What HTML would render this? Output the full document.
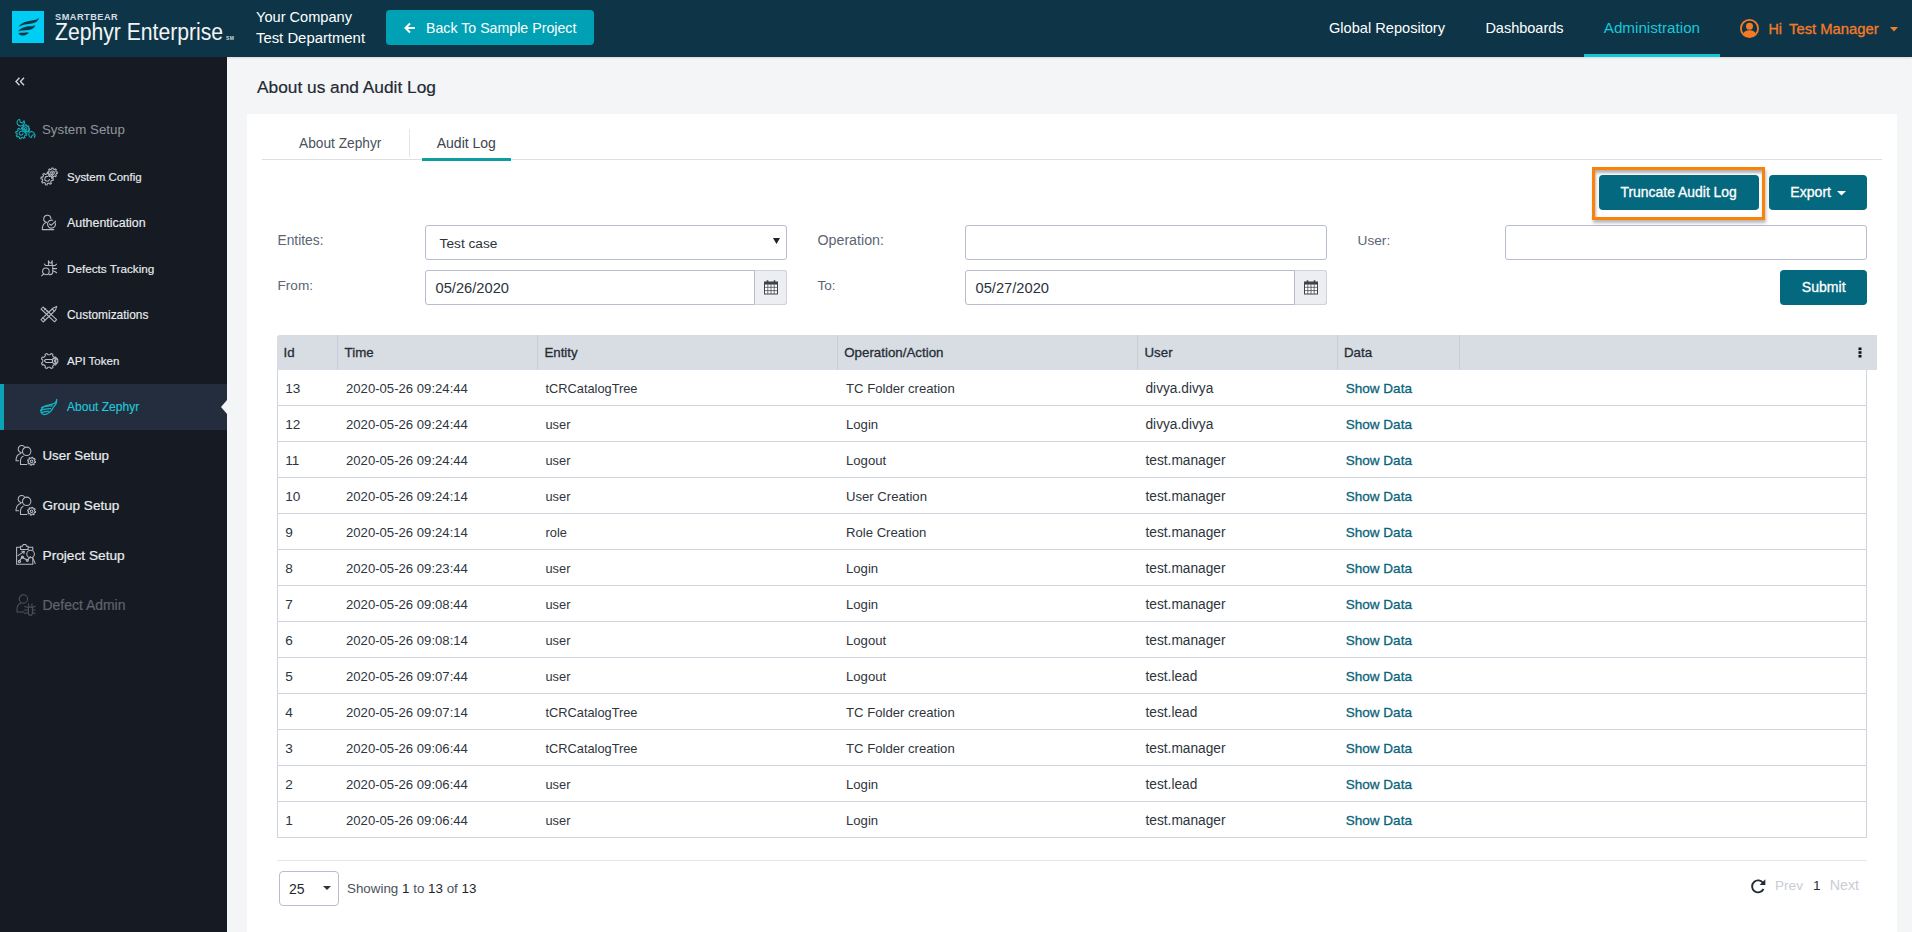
<!DOCTYPE html><html><head><meta charset="utf-8"><style>
*{box-sizing:border-box}
html,body{margin:0;padding:0}
body{width:1912px;height:932px;overflow:hidden;position:relative;background:#f4f5f7;font-family:"Liberation Sans",sans-serif}
.t{position:absolute;line-height:1;white-space:nowrap}
.r{position:absolute}
svg{position:absolute;overflow:visible}
</style></head><body>
<div class="r" style="left:247px;top:114px;width:1650px;height:818px;background:#fff"></div>
<div class="r" style="left:0px;top:0px;width:1912px;height:57px;background:#0e3547;box-shadow:0 1px 2px rgba(0,0,0,.12)"></div>
<div class="r" style="left:12px;top:11px;width:32px;height:32px;background:#00cdf4"></div>
<svg style="left:12px;top:11px" width="32" height="32" viewBox="0 0 32 32">
<path d="M6.3 16.3 C9 11.5 15 10.2 20 9.5 C23.5 9 26 8 27.2 6.2 C26.5 9.5 24 12 20 12.6 C15.5 13.3 10 13.5 6.3 16.3Z" fill="#0e3547"/>
<path d="M6 20.5 C8.5 16.5 14 15.3 18.5 15.2 C21 15.1 22.6 14.6 23.4 13.9 C22.5 17 20 18.6 16.5 18.9 C12.5 19.3 8.5 19 6 20.5Z" fill="#0e3547"/>
<path d="M6.5 22.3 C9 21.5 13 21.7 17 21.5 C15 23.8 12.5 24.8 10 24.6 C8 24.4 6.8 23.5 6.5 22.3Z" fill="#0e3547"/>
</svg>
<div class="t " style="left:55px;top:13.00px;font-size:9.2px;color:#d5dde2;font-weight:700;letter-spacing:0.5px;">SMARTBEAR</div>
<div class="t " style="left:54.5px;top:21.00px;font-size:23.5px;color:#f2f4f5;font-weight:400;transform:scaleX(0.9);transform-origin:0 0;">Zephyr Enterprise</div>
<div class="t " style="left:226px;top:36.00px;font-size:5px;color:#cfd8dc;font-weight:700;letter-spacing:0.3px;">SM</div>
<div class="t " style="left:256px;top:10.00px;font-size:14.6px;color:#ffffff;font-weight:400;">Your Company</div>
<div class="t " style="left:256px;top:31.00px;font-size:14.86px;color:#ffffff;font-weight:400;">Test Department</div>
<div class="r" style="left:386px;top:10px;width:208px;height:35px;background:#00a1b5;border-radius:4px"></div>
<svg style="left:404px;top:22px" width="12" height="12" viewBox="0 0 12 12"><path d="M11 6H2M6 1.5L1.5 6L6 10.5" stroke="#fff" stroke-width="2" fill="none"/></svg>
<div class="t " style="left:426px;top:21.00px;font-size:14.2px;color:#ffffff;font-weight:400;">Back To Sample Project</div>
<div class="t " style="left:1329px;top:21.00px;font-size:14.6px;color:#ffffff;font-weight:400;">Global Repository</div>
<div class="t " style="left:1485.4px;top:21.00px;font-size:14.5px;color:#ffffff;font-weight:400;">Dashboards</div>
<div class="t " style="left:1603.8px;top:20.00px;font-size:15.2px;color:#1cc6d6;font-weight:400;">Administration</div>
<div class="r" style="left:1584px;top:54px;width:136px;height:3px;background:#10c7d6"></div>
<svg style="left:1740px;top:19px" width="19" height="19" viewBox="0 0 19 19">
<circle cx="9.5" cy="9.5" r="8.6" stroke="#f57a26" stroke-width="1.8" fill="none"/>
<circle cx="9.5" cy="7.3" r="3.5" fill="#f57a26"/>
<path d="M3.2 15.2 C3.8 12.2 6.5 11.2 9.5 11.2 C12.5 11.2 15.2 12.2 15.8 15.2 C14 17.3 11.8 18.2 9.5 18.2 C7.2 18.2 5 17.3 3.2 15.2Z" fill="#f57a26"/>
</svg>
<div class="t " style="left:1768.5px;top:22.00px;font-size:14.3px;color:#f57a26;font-weight:400;-webkit-text-stroke:0.3px #f57a26;">Hi</div>
<div class="t " style="left:1789px;top:22.00px;font-size:14.8px;color:#f57a26;font-weight:400;-webkit-text-stroke:0.3px #f57a26;">Test Manager</div>
<svg style="left:1890px;top:27px" width="8" height="5" viewBox="0 0 8 5"><path d="M0 0H8L4 4.5Z" fill="#f57d25"/></svg>
<div class="r" style="left:0px;top:57px;width:227px;height:875px;background:#161b23"></div>
<svg style="left:15px;top:77px" width="10" height="9" viewBox="0 0 10 9"><path d="M4.5 0.8L1 4.5L4.5 8.2M9 0.8L5.5 4.5L9 8.2" stroke="#c9d3e3" stroke-width="1.4" fill="none"/></svg>
<svg style="left:10px;top:114px" width="30" height="30" viewBox="0 0 30 30" fill="none" stroke="#14a9b4" stroke-width="1.1" stroke-linejoin="round" stroke-linecap="round"><path d="M15.60 19.23 L16.89 19.65 L16.58 21.15 L15.23 21.04 L14.39 22.29 L15.00 23.50 L13.73 24.35 L12.85 23.31 L11.37 23.60 L10.95 24.89 L9.45 24.58 L9.56 23.23 L8.31 22.39 L7.10 23.00 L6.25 21.73 L7.29 20.85 L7.00 19.37 L5.71 18.95 L6.02 17.45 L7.37 17.56 L8.21 16.31 L7.60 15.10 L8.87 14.25 L9.75 15.29 L11.23 15.00 L11.65 13.71 L13.15 14.02 L13.04 15.37 L14.29 16.21 L15.50 15.60 L16.35 16.87 L15.31 17.75Z"/><path d="M13 19.3 A1.9 1.9 0 1 1 11.5 17.4"/><path d="M18.68 14.45 L19.60 14.65 L19.49 15.72 L18.55 15.73 L18.05 16.66 L18.56 17.45 L17.73 18.13 L17.06 17.48 L16.05 17.78 L15.85 18.70 L14.78 18.59 L14.77 17.65 L13.84 17.15 L13.05 17.66 L12.37 16.83 L13.02 16.16 L12.72 15.15 L11.80 14.95 L11.91 13.88 L12.85 13.87 L13.35 12.94 L12.84 12.15 L13.67 11.47 L14.34 12.12 L15.35 11.82 L15.55 10.90 L16.62 11.01 L16.63 11.95 L17.56 12.45 L18.35 11.94 L19.03 12.77 L18.38 13.44Z"/><circle cx="15.7" cy="14.8" r="1.3"/><path d="M8.6 5.6 A3.4 3.4 0 0 0 7.8 10.6 A3.4 3.4 0 0 0 12.2 11.3 L13.6 12.2"/><path d="M9.6 5.2 L10.2 8.2 L12.6 8.9 L14 6.7 A3.4 3.4 0 0 1 13.2 11"/><path d="M18 17.4 L19.5 18.2 A3.4 3.4 0 0 1 24.4 19.5 A3.4 3.4 0 0 1 24.2 23.6"/><path d="M18.6 16.2 L19.6 16.7"/><path d="M19 19.5 A3.4 3.4 0 0 0 21.3 23.6 L22.2 21.2 L24.7 20.5"/></svg>
<div class="t " style="left:42px;top:123.00px;font-size:13.3px;color:#90969e;font-weight:400;">System Setup</div>
<div class="r" style="left:0px;top:384px;width:227px;height:46px;background:#232d3d"></div>
<div class="r" style="left:0px;top:384px;width:4px;height:46px;background:#0aa3b8"></div>
<svg style="left:221px;top:400px" width="6" height="14" viewBox="0 0 6 14"><path d="M6 0V14L0 7Z" fill="#f4f5f7"/></svg>
<div class="t " style="left:67px;top:172.00px;font-size:11.47px;color:#e9ecef;font-weight:400;-webkit-text-stroke:0.15px #e9ecef;">System Config</div>
<div class="t " style="left:67px;top:217.00px;font-size:12.42px;color:#e9ecef;font-weight:400;-webkit-text-stroke:0.15px #e9ecef;">Authentication</div>
<div class="t " style="left:67px;top:263.00px;font-size:11.73px;color:#e9ecef;font-weight:400;-webkit-text-stroke:0.15px #e9ecef;">Defects Tracking</div>
<div class="t " style="left:67px;top:310.00px;font-size:11.92px;color:#e9ecef;font-weight:400;-webkit-text-stroke:0.15px #e9ecef;">Customizations</div>
<div class="t " style="left:67px;top:356.00px;font-size:11.54px;color:#e9ecef;font-weight:400;-webkit-text-stroke:0.15px #e9ecef;">API Token</div>
<div class="t " style="left:67px;top:401.00px;font-size:12.03px;color:#1fc8d9;font-weight:400;-webkit-text-stroke:0.15px #1fc8d9;">About Zephyr</div>
<svg style="left:36px;top:162px" width="28" height="28" viewBox="0 0 28 28" fill="none" stroke="#b4b9c2" stroke-width="1.05" stroke-linejoin="round" stroke-linecap="round"><path d="M15.79 16.49 L17.30 16.88 L17.05 18.56 L15.49 18.48 L14.64 19.90 L15.43 21.24 L14.06 22.25 L13.01 21.09 L11.41 21.49 L11.02 23.00 L9.34 22.75 L9.42 21.19 L8.00 20.34 L6.66 21.13 L5.65 19.76 L6.81 18.71 L6.41 17.11 L4.90 16.72 L5.15 15.04 L6.71 15.12 L7.56 13.70 L6.77 12.36 L8.14 11.35 L9.19 12.51 L10.79 12.11 L11.18 10.60 L12.86 10.85 L12.78 12.41 L14.20 13.26 L15.54 12.47 L16.55 13.84 L15.39 14.89Z"/><path d="M13.5 17.5 A2.4 2.4 0 1 1 11.6 14.4"/><path d="M20.21 9.99 L21.35 10.13 L21.35 11.47 L20.21 11.61 L19.70 12.85 L20.41 13.76 L19.46 14.71 L18.55 14.00 L17.31 14.51 L17.17 15.65 L15.83 15.65 L15.69 14.51 L14.45 14.00 L13.54 14.71 L12.59 13.76 L13.30 12.85 L12.79 11.61 L11.65 11.47 L11.65 10.13 L12.79 9.99 L13.30 8.75 L12.59 7.84 L13.54 6.89 L14.45 7.60 L15.69 7.09 L15.83 5.95 L17.17 5.95 L17.31 7.09 L18.55 7.60 L19.46 6.89 L20.41 7.84 L19.70 8.75Z"/><circle cx="16.5" cy="10.8" r="1.9"/><circle cx="16.5" cy="10.8" r="0.5" fill="#b4b9c2"/></svg>
<svg style="left:36px;top:208px" width="28" height="28" viewBox="0 0 28 28" fill="none" stroke="#b4b9c2" stroke-width="1.05" stroke-linejoin="round" stroke-linecap="round"><path d="M10.4 14.3 A3.6 3.6 0 1 1 14.9 10.6"/><path d="M10.3 14.4 C7.5 15.3 6.2 17.8 6.3 21.6 L17.8 21.6"/><path d="M19.3 14.8 A4 4 0 1 1 16.7 12.3"/><path d="M13.4 16 L15.2 17.3 L19.6 13.1"/></svg>
<svg style="left:36px;top:254px" width="28" height="28" viewBox="0 0 28 28" fill="none" stroke="#b4b9c2" stroke-width="1.05" stroke-linejoin="round" stroke-linecap="round"><path d="M11.8 11.4 L16.8 11.4 L16.8 18 C16.8 20 15.5 20.6 14 20.6 L13 20.6"/><path d="M12.5 11.3 L12.4 6.8 L13.8 9 L15.2 9 L16.2 6.8 L16.2 11.3"/><path d="M8.3 10 L9.5 11.4 L19.2 11.4 L20.5 10.2"/><path d="M16.8 14.6 L20.6 14.6"/><path d="M16.8 17 L18.8 17.5 L20.6 18.8"/><circle cx="9.9" cy="17.4" r="3.3"/><path d="M7.6 19.8 L5.6 21.8"/></svg>
<svg style="left:36px;top:300px" width="28" height="28" viewBox="0 0 28 28" fill="none" stroke="#b4b9c2" stroke-width="1.05" stroke-linejoin="round" stroke-linecap="round"><path d="M5 9 L7 7 L20.6 19.6 L18.6 21.8 Z"/><path d="M8.5 9.8 L9.8 8.6 M10.8 11.8 L11.8 10.9"/><path d="M5 19.7 L17.2 8 L20.8 6.4 L19.4 10.1 L7.2 22 Z"/><path d="M6.8 17.6 L9 19.9 M16.2 9 L18.4 11.1"/></svg>
<svg style="left:36px;top:346px" width="28" height="28" viewBox="0 0 28 28" fill="none" stroke="#b4b9c2" stroke-width="1.05" stroke-linejoin="round" stroke-linecap="round"><path d="M19.20 16.09 L20.55 16.95 L19.74 18.93 L18.18 18.59 L16.62 20.16 L16.96 21.72 L14.99 22.54 L14.12 21.20 L11.91 21.20 L11.05 22.55 L9.07 21.74 L9.41 20.18 L7.84 18.62 L6.28 18.96 L5.46 16.99 L6.80 16.12 L6.80 13.91 L5.45 13.05 L6.26 11.07 L7.82 11.41 L9.38 9.84 L9.04 8.28 L11.01 7.46 L11.88 8.80 L14.09 8.80 L14.95 7.45 L16.93 8.26 L16.59 9.82 L18.16 11.38 L19.72 11.04 L20.54 13.01 L19.20 13.88Z"/><path d="M16.5 13.4 L9.6 13.4 L8.4 14.9 L9.9 16.4 L16.5 16.4"/><circle cx="19.1" cy="14.9" r="2.8"/><path d="M18.4 14 L18.4 15.8 M19.8 14 L19.8 15.8"/></svg>
<svg style="left:36px;top:393px" width="28" height="28" viewBox="0 0 28 28" fill="none" stroke="#13b5c4" stroke-width="1.2" stroke-linejoin="round" stroke-linecap="round"><path d="M20.7 6.3 C20.5 9 19 10.5 16.5 11.2 C13 12.1 9.5 12 7.2 14 C5.2 15.7 4.5 17.5 5.2 19.6 C6 21.6 8.5 22 10.8 21 C13.5 19.8 16 17.5 17.5 14 C19.5 12.5 21 10 20.7 6.3 Z"/><path d="M5.5 14.8 C8 12.8 12 13 16.2 12.8"/><path d="M4.6 17.4 C7.5 15.8 11 16 14.8 15.6"/><path d="M5.2 19.6 C8 18.6 10.5 18.5 12.6 18.3"/></svg>
<div class="t " style="left:42.5px;top:449.00px;font-size:13.31px;color:#e9ecef;font-weight:400;-webkit-text-stroke:0.2px #e9ecef;">User Setup</div>
<div class="t " style="left:42.5px;top:499.00px;font-size:13.54px;color:#e9ecef;font-weight:400;-webkit-text-stroke:0.2px #e9ecef;">Group Setup</div>
<div class="t " style="left:42.5px;top:549.00px;font-size:13.69px;color:#e9ecef;font-weight:400;-webkit-text-stroke:0.2px #e9ecef;">Project Setup</div>
<div class="t " style="left:42.5px;top:599.00px;font-size:13.96px;color:#5e646d;font-weight:400;-webkit-text-stroke:0.2px #5e646d;">Defect Admin</div>
<svg style="left:10px;top:440px" width="30" height="30" viewBox="0 0 30 30" fill="none" stroke="#b4b9c2" stroke-width="1.05" stroke-linejoin="round" stroke-linecap="round"><path d="M12.4 12.6 A3.6 3.6 0 1 1 14.3 6.5"/><path d="M10.6 13.4 C7.5 14.2 6 16.5 6 20.8 L8.7 20.8"/><circle cx="16.7" cy="11.3" r="4.2"/><path d="M13.2 16.3 C11.3 17 10.5 19 10.5 21.5 L10.5 24.5 L16.8 24.5"/><path d="M24.70 21.15 L25.59 21.45 L25.37 22.52 L24.44 22.45 L23.83 23.36 L24.25 24.20 L23.33 24.81 L22.72 24.09 L21.65 24.30 L21.35 25.19 L20.28 24.97 L20.35 24.04 L19.44 23.43 L18.60 23.85 L17.99 22.93 L18.71 22.32 L18.50 21.25 L17.61 20.95 L17.83 19.88 L18.76 19.95 L19.37 19.04 L18.95 18.20 L19.87 17.59 L20.48 18.31 L21.55 18.10 L21.85 17.21 L22.92 17.43 L22.85 18.36 L23.76 18.97 L24.60 18.55 L25.21 19.47 L24.49 20.08Z"/><circle cx="21.6" cy="21.2" r="1.3"/></svg>
<svg style="left:10px;top:490px" width="30" height="30" viewBox="0 0 30 30" fill="none" stroke="#b4b9c2" stroke-width="1.05" stroke-linejoin="round" stroke-linecap="round"><path d="M12.4 12.6 A3.6 3.6 0 1 1 14.3 6.5"/><path d="M10.6 13.4 C7.5 14.2 6 16.5 6 20.8 L8.7 20.8"/><circle cx="16.7" cy="11.3" r="4.2"/><path d="M13.2 16.3 C11.3 17 10.5 19 10.5 21.5 L10.5 24.5 L16.8 24.5"/><path d="M24.70 21.15 L25.59 21.45 L25.37 22.52 L24.44 22.45 L23.83 23.36 L24.25 24.20 L23.33 24.81 L22.72 24.09 L21.65 24.30 L21.35 25.19 L20.28 24.97 L20.35 24.04 L19.44 23.43 L18.60 23.85 L17.99 22.93 L18.71 22.32 L18.50 21.25 L17.61 20.95 L17.83 19.88 L18.76 19.95 L19.37 19.04 L18.95 18.20 L19.87 17.59 L20.48 18.31 L21.55 18.10 L21.85 17.21 L22.92 17.43 L22.85 18.36 L23.76 18.97 L24.60 18.55 L25.21 19.47 L24.49 20.08Z"/><circle cx="21.6" cy="21.2" r="1.3"/></svg>
<svg style="left:10px;top:540px" width="30" height="30" viewBox="0 0 30 30" fill="none" stroke="#b4b9c2" stroke-width="1.05" stroke-linejoin="round" stroke-linecap="round"><path d="M10.5 7.3 L6.6 7.3 L6.6 24.3 L22.8 24.3 L22.8 18.5 M22.8 10 L22.8 7.3 L18.3 7.3"/><path d="M10.6 9.5 L10.6 6.3 L12.5 6.3 L13.2 4.4 L15.8 4.4 L16.5 6.3 L18.2 6.3 L18.2 9.5 Z"/><path d="M8.8 21.4 L12.4 17.2 L17.3 20.3 L20.4 16.6"/><circle cx="9.4" cy="21.4" r="1.1"/><circle cx="12.4" cy="17.2" r="1.1"/><circle cx="17.3" cy="20.3" r="1.1"/><path d="M8 15.6 L13.8 11.6 M11.8 11.3 L14.4 11.2 L13.9 13.6"/><circle cx="20.6" cy="14" r="3.8"/><path d="M22.6 17.4 L25.2 23.6"/></svg>
<svg style="left:10px;top:590px" width="30" height="30" viewBox="0 0 30 30" fill="none" stroke="#4d535c" stroke-width="1.05" stroke-linejoin="round" stroke-linecap="round"><circle cx="13.4" cy="9" r="4.2"/><path d="M11.2 12.9 C8.5 13.8 7 16.5 7 19.5 L7 22 L14 22"/><path d="M18.4 17.2 L22.4 17.2 L22.4 23 C22.4 24.6 21.4 25.3 20.4 25.3 C19.4 25.3 18.4 24.6 18.4 23 Z"/><path d="M18.9 17 L18.6 13.8 M21.8 17 L22 13.8 M14.6 16.5 L18.4 17.4 M22.4 17.4 L25 16.3 M14.4 20 L18.4 20 M22.4 20 L25 20 M14.6 23.5 L18.4 22.6 M22.4 22.6 L25 23.6"/></svg>
<div class="t " style="left:257px;top:79.00px;font-size:17.31px;color:#232a33;font-weight:400;-webkit-text-stroke:0.2px #232a33;">About us and Audit Log</div>
<div class="r" style="left:262px;top:159px;width:1620px;height:1px;background:#dcdfe3"></div>
<div class="r" style="left:409px;top:129px;width:1px;height:28px;background:#e3e5e8"></div>
<div class="t " style="left:299px;top:137.00px;font-size:13.73px;color:#4a525c;font-weight:400;">About Zephyr</div>
<div class="t " style="left:436.7px;top:136.00px;font-size:14.03px;color:#3c444e;font-weight:400;">Audit Log</div>
<div class="r" style="left:422px;top:158px;width:89px;height:3px;background:#0e9c9e"></div>
<div class="t " style="left:277.5px;top:234.00px;font-size:13.79px;color:#5b6573;font-weight:400;">Entites:</div>
<div class="t " style="left:817.5px;top:233.00px;font-size:14.22px;color:#5b6573;font-weight:400;">Operation:</div>
<div class="t " style="left:1357.5px;top:234.00px;font-size:13.7px;color:#5b6573;font-weight:400;">User:</div>
<div class="t " style="left:277.5px;top:279.00px;font-size:13.6px;color:#5b6573;font-weight:400;">From:</div>
<div class="t " style="left:817.5px;top:279.00px;font-size:13.6px;color:#5b6573;font-weight:400;">To:</div>
<div class="r" style="left:425px;top:225px;width:362px;height:35px;border:1px solid #b7bdcc;border-radius:3px;background:#fff"></div>
<div class="t " style="left:439.6px;top:237.00px;font-size:13.7px;color:#2b323a;font-weight:400;">Test case</div>
<svg style="left:773px;top:238px" width="7" height="6" viewBox="0 0 7 6"><path d="M0 0H7L3.5 6Z" fill="#222"/></svg>
<div class="r" style="left:965px;top:225px;width:362px;height:35px;border:1px solid #b7bdcc;border-radius:3px;background:#fff"></div>
<div class="r" style="left:1505px;top:225px;width:362px;height:35px;border:1px solid #b7bdcc;border-radius:3px;background:#fff"></div>
<div class="r" style="left:425px;top:270px;width:362px;height:35px;border:1px solid #b7bdcc;border-radius:3px;background:#fff"></div>
<div class="r" style="left:754px;top:270px;width:33px;height:35px;border:1px solid #d0d3d8;border-left:1px solid #b7bdcc;border-radius:0 3px 3px 0;background:#eceef1"></div>
<svg style="left:764px;top:280px" width="14" height="14" viewBox="0 0 14 14"><rect x="0.5" y="2" width="13" height="12" fill="#fff" stroke="#3f444c" stroke-width="1"/><rect x="0.5" y="2" width="13" height="2.6" fill="#3f444c"/><path d="M3.5 0.3v3M10.5 0.3v3" stroke="#3f444c" stroke-width="1.6"/><path d="M0.5 7.3h13M0.5 10.6h13M3.8 4.5v9.5M7 4.5v9.5M10.2 4.5v9.5" stroke="#3f444c" stroke-width="0.75"/></svg>
<div class="t " style="left:435.5px;top:281.00px;font-size:14.69px;color:#2b323a;font-weight:400;">05/26/2020</div>
<div class="r" style="left:965px;top:270px;width:362px;height:35px;border:1px solid #b7bdcc;border-radius:3px;background:#fff"></div>
<div class="r" style="left:1294px;top:270px;width:33px;height:35px;border:1px solid #d0d3d8;border-left:1px solid #b7bdcc;border-radius:0 3px 3px 0;background:#eceef1"></div>
<svg style="left:1304px;top:280px" width="14" height="14" viewBox="0 0 14 14"><rect x="0.5" y="2" width="13" height="12" fill="#fff" stroke="#3f444c" stroke-width="1"/><rect x="0.5" y="2" width="13" height="2.6" fill="#3f444c"/><path d="M3.5 0.3v3M10.5 0.3v3" stroke="#3f444c" stroke-width="1.6"/><path d="M0.5 7.3h13M0.5 10.6h13M3.8 4.5v9.5M7 4.5v9.5M10.2 4.5v9.5" stroke="#3f444c" stroke-width="0.75"/></svg>
<div class="t " style="left:975.5px;top:281.00px;font-size:14.69px;color:#2b323a;font-weight:400;">05/27/2020</div>
<div class="r" style="left:1780px;top:270px;width:87px;height:35px;background:#04687e;border-radius:4px"></div>
<div class="t " style="left:1801.8px;top:280.00px;font-size:14.07px;color:#ffffff;font-weight:400;-webkit-text-stroke:0.3px #ffffff;">Submit</div>
<div class="r" style="left:1592px;top:167px;width:173px;height:53px;border:3px solid #fb8208;box-shadow:1px 3px 3px rgba(0,0,0,.28), inset 1px 3px 3px rgba(0,0,0,.3)"></div>
<div class="r" style="left:1599px;top:175px;width:160px;height:35px;background:#04687e;border-radius:4px"></div>
<div class="t " style="left:1620.5px;top:186.00px;font-size:13.93px;color:#ffffff;font-weight:400;-webkit-text-stroke:0.3px #ffffff;">Truncate Audit Log</div>
<div class="r" style="left:1769px;top:175px;width:98px;height:35px;background:#04687e;border-radius:4px"></div>
<div class="t " style="left:1790.3px;top:185.00px;font-size:14.08px;color:#ffffff;font-weight:400;-webkit-text-stroke:0.3px #ffffff;">Export</div>
<svg style="left:1837px;top:191px" width="9" height="5" viewBox="0 0 9 5"><path d="M0 0H9L4.5 4.5Z" fill="#fff"/></svg>
<div class="r" style="left:277px;top:335px;width:1600px;height:35px;background:#d8dde4;border-radius:3px 0 0 0"></div>
<div class="r" style="left:337px;top:335px;width:1px;height:35px;background:#c9ced6"></div>
<div class="r" style="left:537px;top:335px;width:1px;height:35px;background:#c9ced6"></div>
<div class="r" style="left:837px;top:335px;width:1px;height:35px;background:#c9ced6"></div>
<div class="r" style="left:1137px;top:335px;width:1px;height:35px;background:#c9ced6"></div>
<div class="r" style="left:1337px;top:335px;width:1px;height:35px;background:#c9ced6"></div>
<div class="r" style="left:1459px;top:335px;width:1px;height:35px;background:#c9ced6"></div>
<div class="t " style="left:283.5px;top:346.00px;font-size:13.3px;color:#262d36;font-weight:400;-webkit-text-stroke:0.3px #262d36;">Id</div>
<div class="t " style="left:344.6px;top:346.00px;font-size:13.3px;color:#262d36;font-weight:400;-webkit-text-stroke:0.3px #262d36;">Time</div>
<div class="t " style="left:544.4px;top:346.00px;font-size:13.3px;color:#262d36;font-weight:400;-webkit-text-stroke:0.3px #262d36;">Entity</div>
<div class="t " style="left:844.2px;top:346.00px;font-size:13.34px;color:#262d36;font-weight:400;-webkit-text-stroke:0.3px #262d36;">Operation/Action</div>
<div class="t " style="left:1144.5px;top:346.00px;font-size:13.3px;color:#262d36;font-weight:400;-webkit-text-stroke:0.3px #262d36;">User</div>
<div class="t " style="left:1344px;top:346.00px;font-size:13.3px;color:#262d36;font-weight:400;-webkit-text-stroke:0.3px #262d36;">Data</div>
<svg style="left:1858px;top:347px" width="4" height="11" viewBox="0 0 4 11"><rect x="0.5" y="0.5" width="3" height="2.6" fill="#111"/><rect x="0.5" y="4.2" width="3" height="2.6" fill="#111"/><rect x="0.5" y="7.9" width="3" height="2.6" fill="#111"/></svg>
<div class="r" style="left:277px;top:370px;width:1590px;height:468px;border:1px solid #cfd5df;border-top:none;background:#fff"></div>
<div class="r" style="left:278px;top:405px;width:1588px;height:1px;background:#cfd5df"></div>
<div class="t " style="left:285.2px;top:382.00px;font-size:13.6px;color:#2e353d;font-weight:400;">13</div>
<div class="t " style="left:346px;top:382.00px;font-size:13.14px;color:#2e353d;font-weight:400;">2020-05-26 09:24:44</div>
<div class="t " style="left:545.5px;top:383.00px;font-size:12.8px;color:#2e353d;font-weight:400;">tCRCatalogTree</div>
<div class="t " style="left:846px;top:382.00px;font-size:13.13px;color:#2e353d;font-weight:400;">TC Folder creation</div>
<div class="t " style="left:1145.5px;top:382.00px;font-size:13.71px;color:#2e353d;font-weight:400;">divya.divya</div>
<div class="t " style="left:1345.7px;top:382.00px;font-size:13.55px;color:#0a6479;font-weight:400;-webkit-text-stroke:0.3px #0a6479;">Show Data</div>
<div class="r" style="left:278px;top:441px;width:1588px;height:1px;background:#cfd5df"></div>
<div class="t " style="left:285.2px;top:418.00px;font-size:13.6px;color:#2e353d;font-weight:400;">12</div>
<div class="t " style="left:346px;top:418.00px;font-size:13.14px;color:#2e353d;font-weight:400;">2020-05-26 09:24:44</div>
<div class="t " style="left:545.5px;top:419.00px;font-size:12.8px;color:#2e353d;font-weight:400;">user</div>
<div class="t " style="left:846px;top:418.00px;font-size:13.13px;color:#2e353d;font-weight:400;">Login</div>
<div class="t " style="left:1145.5px;top:418.00px;font-size:13.71px;color:#2e353d;font-weight:400;">divya.divya</div>
<div class="t " style="left:1345.7px;top:418.00px;font-size:13.55px;color:#0a6479;font-weight:400;-webkit-text-stroke:0.3px #0a6479;">Show Data</div>
<div class="r" style="left:278px;top:477px;width:1588px;height:1px;background:#cfd5df"></div>
<div class="t " style="left:285.2px;top:454.00px;font-size:13.6px;color:#2e353d;font-weight:400;">11</div>
<div class="t " style="left:346px;top:454.00px;font-size:13.14px;color:#2e353d;font-weight:400;">2020-05-26 09:24:44</div>
<div class="t " style="left:545.5px;top:455.00px;font-size:12.8px;color:#2e353d;font-weight:400;">user</div>
<div class="t " style="left:846px;top:454.00px;font-size:13.13px;color:#2e353d;font-weight:400;">Logout</div>
<div class="t " style="left:1145.5px;top:454.00px;font-size:13.71px;color:#2e353d;font-weight:400;">test.manager</div>
<div class="t " style="left:1345.7px;top:454.00px;font-size:13.55px;color:#0a6479;font-weight:400;-webkit-text-stroke:0.3px #0a6479;">Show Data</div>
<div class="r" style="left:278px;top:513px;width:1588px;height:1px;background:#cfd5df"></div>
<div class="t " style="left:285.2px;top:490.00px;font-size:13.6px;color:#2e353d;font-weight:400;">10</div>
<div class="t " style="left:346px;top:490.00px;font-size:13.14px;color:#2e353d;font-weight:400;">2020-05-26 09:24:14</div>
<div class="t " style="left:545.5px;top:491.00px;font-size:12.8px;color:#2e353d;font-weight:400;">user</div>
<div class="t " style="left:846px;top:490.00px;font-size:13.13px;color:#2e353d;font-weight:400;">User Creation</div>
<div class="t " style="left:1145.5px;top:490.00px;font-size:13.71px;color:#2e353d;font-weight:400;">test.manager</div>
<div class="t " style="left:1345.7px;top:490.00px;font-size:13.55px;color:#0a6479;font-weight:400;-webkit-text-stroke:0.3px #0a6479;">Show Data</div>
<div class="r" style="left:278px;top:549px;width:1588px;height:1px;background:#cfd5df"></div>
<div class="t " style="left:285.2px;top:526.00px;font-size:13.6px;color:#2e353d;font-weight:400;">9</div>
<div class="t " style="left:346px;top:526.00px;font-size:13.14px;color:#2e353d;font-weight:400;">2020-05-26 09:24:14</div>
<div class="t " style="left:545.5px;top:527.00px;font-size:12.8px;color:#2e353d;font-weight:400;">role</div>
<div class="t " style="left:846px;top:526.00px;font-size:13.13px;color:#2e353d;font-weight:400;">Role Creation</div>
<div class="t " style="left:1145.5px;top:526.00px;font-size:13.71px;color:#2e353d;font-weight:400;">test.manager</div>
<div class="t " style="left:1345.7px;top:526.00px;font-size:13.55px;color:#0a6479;font-weight:400;-webkit-text-stroke:0.3px #0a6479;">Show Data</div>
<div class="r" style="left:278px;top:585px;width:1588px;height:1px;background:#cfd5df"></div>
<div class="t " style="left:285.2px;top:562.00px;font-size:13.6px;color:#2e353d;font-weight:400;">8</div>
<div class="t " style="left:346px;top:562.00px;font-size:13.14px;color:#2e353d;font-weight:400;">2020-05-26 09:23:44</div>
<div class="t " style="left:545.5px;top:563.00px;font-size:12.8px;color:#2e353d;font-weight:400;">user</div>
<div class="t " style="left:846px;top:562.00px;font-size:13.13px;color:#2e353d;font-weight:400;">Login</div>
<div class="t " style="left:1145.5px;top:562.00px;font-size:13.71px;color:#2e353d;font-weight:400;">test.manager</div>
<div class="t " style="left:1345.7px;top:562.00px;font-size:13.55px;color:#0a6479;font-weight:400;-webkit-text-stroke:0.3px #0a6479;">Show Data</div>
<div class="r" style="left:278px;top:621px;width:1588px;height:1px;background:#cfd5df"></div>
<div class="t " style="left:285.2px;top:598.00px;font-size:13.6px;color:#2e353d;font-weight:400;">7</div>
<div class="t " style="left:346px;top:598.00px;font-size:13.14px;color:#2e353d;font-weight:400;">2020-05-26 09:08:44</div>
<div class="t " style="left:545.5px;top:599.00px;font-size:12.8px;color:#2e353d;font-weight:400;">user</div>
<div class="t " style="left:846px;top:598.00px;font-size:13.13px;color:#2e353d;font-weight:400;">Login</div>
<div class="t " style="left:1145.5px;top:598.00px;font-size:13.71px;color:#2e353d;font-weight:400;">test.manager</div>
<div class="t " style="left:1345.7px;top:598.00px;font-size:13.55px;color:#0a6479;font-weight:400;-webkit-text-stroke:0.3px #0a6479;">Show Data</div>
<div class="r" style="left:278px;top:657px;width:1588px;height:1px;background:#cfd5df"></div>
<div class="t " style="left:285.2px;top:634.00px;font-size:13.6px;color:#2e353d;font-weight:400;">6</div>
<div class="t " style="left:346px;top:634.00px;font-size:13.14px;color:#2e353d;font-weight:400;">2020-05-26 09:08:14</div>
<div class="t " style="left:545.5px;top:635.00px;font-size:12.8px;color:#2e353d;font-weight:400;">user</div>
<div class="t " style="left:846px;top:634.00px;font-size:13.13px;color:#2e353d;font-weight:400;">Logout</div>
<div class="t " style="left:1145.5px;top:634.00px;font-size:13.71px;color:#2e353d;font-weight:400;">test.manager</div>
<div class="t " style="left:1345.7px;top:634.00px;font-size:13.55px;color:#0a6479;font-weight:400;-webkit-text-stroke:0.3px #0a6479;">Show Data</div>
<div class="r" style="left:278px;top:693px;width:1588px;height:1px;background:#cfd5df"></div>
<div class="t " style="left:285.2px;top:670.00px;font-size:13.6px;color:#2e353d;font-weight:400;">5</div>
<div class="t " style="left:346px;top:670.00px;font-size:13.14px;color:#2e353d;font-weight:400;">2020-05-26 09:07:44</div>
<div class="t " style="left:545.5px;top:671.00px;font-size:12.8px;color:#2e353d;font-weight:400;">user</div>
<div class="t " style="left:846px;top:670.00px;font-size:13.13px;color:#2e353d;font-weight:400;">Logout</div>
<div class="t " style="left:1145.5px;top:670.00px;font-size:13.71px;color:#2e353d;font-weight:400;">test.lead</div>
<div class="t " style="left:1345.7px;top:670.00px;font-size:13.55px;color:#0a6479;font-weight:400;-webkit-text-stroke:0.3px #0a6479;">Show Data</div>
<div class="r" style="left:278px;top:729px;width:1588px;height:1px;background:#cfd5df"></div>
<div class="t " style="left:285.2px;top:706.00px;font-size:13.6px;color:#2e353d;font-weight:400;">4</div>
<div class="t " style="left:346px;top:706.00px;font-size:13.14px;color:#2e353d;font-weight:400;">2020-05-26 09:07:14</div>
<div class="t " style="left:545.5px;top:707.00px;font-size:12.8px;color:#2e353d;font-weight:400;">tCRCatalogTree</div>
<div class="t " style="left:846px;top:706.00px;font-size:13.13px;color:#2e353d;font-weight:400;">TC Folder creation</div>
<div class="t " style="left:1145.5px;top:706.00px;font-size:13.71px;color:#2e353d;font-weight:400;">test.lead</div>
<div class="t " style="left:1345.7px;top:706.00px;font-size:13.55px;color:#0a6479;font-weight:400;-webkit-text-stroke:0.3px #0a6479;">Show Data</div>
<div class="r" style="left:278px;top:765px;width:1588px;height:1px;background:#cfd5df"></div>
<div class="t " style="left:285.2px;top:742.00px;font-size:13.6px;color:#2e353d;font-weight:400;">3</div>
<div class="t " style="left:346px;top:742.00px;font-size:13.14px;color:#2e353d;font-weight:400;">2020-05-26 09:06:44</div>
<div class="t " style="left:545.5px;top:743.00px;font-size:12.8px;color:#2e353d;font-weight:400;">tCRCatalogTree</div>
<div class="t " style="left:846px;top:742.00px;font-size:13.13px;color:#2e353d;font-weight:400;">TC Folder creation</div>
<div class="t " style="left:1145.5px;top:742.00px;font-size:13.71px;color:#2e353d;font-weight:400;">test.manager</div>
<div class="t " style="left:1345.7px;top:742.00px;font-size:13.55px;color:#0a6479;font-weight:400;-webkit-text-stroke:0.3px #0a6479;">Show Data</div>
<div class="r" style="left:278px;top:801px;width:1588px;height:1px;background:#cfd5df"></div>
<div class="t " style="left:285.2px;top:778.00px;font-size:13.6px;color:#2e353d;font-weight:400;">2</div>
<div class="t " style="left:346px;top:778.00px;font-size:13.14px;color:#2e353d;font-weight:400;">2020-05-26 09:06:44</div>
<div class="t " style="left:545.5px;top:779.00px;font-size:12.8px;color:#2e353d;font-weight:400;">user</div>
<div class="t " style="left:846px;top:778.00px;font-size:13.13px;color:#2e353d;font-weight:400;">Login</div>
<div class="t " style="left:1145.5px;top:778.00px;font-size:13.71px;color:#2e353d;font-weight:400;">test.lead</div>
<div class="t " style="left:1345.7px;top:778.00px;font-size:13.55px;color:#0a6479;font-weight:400;-webkit-text-stroke:0.3px #0a6479;">Show Data</div>
<div class="t " style="left:285.2px;top:814.00px;font-size:13.6px;color:#2e353d;font-weight:400;">1</div>
<div class="t " style="left:346px;top:814.00px;font-size:13.14px;color:#2e353d;font-weight:400;">2020-05-26 09:06:44</div>
<div class="t " style="left:545.5px;top:815.00px;font-size:12.8px;color:#2e353d;font-weight:400;">user</div>
<div class="t " style="left:846px;top:814.00px;font-size:13.13px;color:#2e353d;font-weight:400;">Login</div>
<div class="t " style="left:1145.5px;top:814.00px;font-size:13.71px;color:#2e353d;font-weight:400;">test.manager</div>
<div class="t " style="left:1345.7px;top:814.00px;font-size:13.55px;color:#0a6479;font-weight:400;-webkit-text-stroke:0.3px #0a6479;">Show Data</div>
<div class="r" style="left:277px;top:860px;width:1590px;height:1px;background:#e2e5e9"></div>
<div class="r" style="left:279px;top:871px;width:60px;height:35px;border:1px solid #b7bdcc;border-radius:4px;background:#fff"></div>
<div class="t " style="left:289px;top:882.00px;font-size:14.0px;color:#222930;font-weight:400;">25</div>
<svg style="left:323px;top:886px" width="8" height="4" viewBox="0 0 8 4"><path d="M0 0H8L4 4Z" fill="#333"/></svg>
<div class="t " style="left:347px;top:882.00px;font-size:13.39px;color:#4a525c;font-weight:400;">Showing <span style="color:#1e242b">1</span> to <span style="color:#1e242b">13</span> of <span style="color:#1e242b">13</span></div>
<svg style="left:1750px;top:878px" width="16" height="16" viewBox="0 0 16 16"><path d="M13.2 5.2A6 6 0 1 0 13.5 11" fill="none" stroke="#222b35" stroke-width="1.9"/><path d="M15.3 1.3V7H9.6Z" fill="#222b35"/></svg>
<div class="t " style="left:1775px;top:879.00px;font-size:13.62px;color:#c9cdd3;font-weight:400;">Prev</div>
<div class="t " style="left:1813px;top:879.00px;font-size:13.6px;color:#2b323a;font-weight:400;">1</div>
<div class="t " style="left:1829.7px;top:878.00px;font-size:14.25px;color:#c9cdd3;font-weight:400;">Next</div>
</body></html>
